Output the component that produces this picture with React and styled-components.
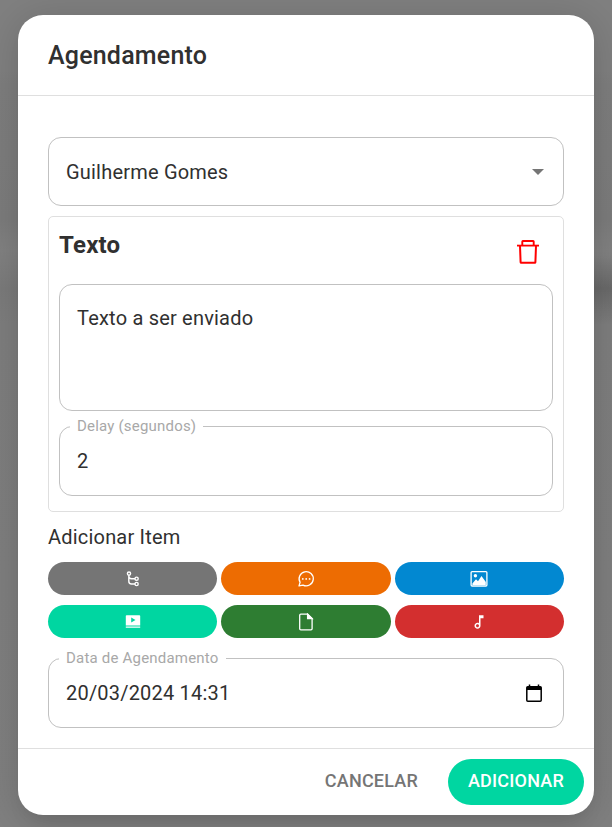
import React, { useState } from "react";
import styled, { createGlobalStyle } from "styled-components";

const GlobalStyle = createGlobalStyle`
  *, *::before, *::after { box-sizing: border-box; }
  body {
    margin: 0;
    background: #808080;
    color: #303030;
    font-family: Roboto, "Liberation Sans", sans-serif;
    font-size: 20px;
    letter-spacing: 0.01em;
  }
  button, input, select, textarea { font: inherit; color: inherit; letter-spacing: inherit; }
`;

const Backdrop = styled.div`
  min-height: 100vh;
  display: flex;
  align-items: center;
  padding: 15px 18px 12px;
  background:
    linear-gradient(transparent 255px, rgba(0, 0, 0, 0.14) 288px, transparent 325px) right / 50% 100% no-repeat,
    linear-gradient(#808080 0 70px, #7e7e7e 84px, #7c7c7c 220px, #828282 250px, #7b7b7b 288px, #7e7e7e 325px, #808080);
`;

const Dialog = styled.form`
  flex: 1;
  min-width: 0;
  background: #fff;
  border-radius: 25px;
  box-shadow: 0 14px 19px -9px rgba(0, 0, 0, 0.1), 0 4px 40px 3px rgba(0, 0, 0, 0.14);
`;

const Header = styled.header`
  padding: 21px 30px 19px;
  border-bottom: 1px solid #dfdfdf;
`;

const Title = styled.h2`
  margin: 0;
  font-size: 25px;
  line-height: 40px;
  font-weight: 500;
`;

const Content = styled.div`
  padding: 41px 30px 20px;
`;

const Footer = styled.footer`
  display: flex;
  justify-content: flex-end;
  gap: 10px;
  padding: 10px;
  border-top: 1px solid #dfdfdf;
`;

const Field = styled.div`
  position: relative;
  display: flex;
  align-items: center;
  min-height: ${(p) => p.$height || 70}px;
  border: 1px solid #c1c1c1;
  border-radius: 13px;
`;

const FieldLabel = styled.label`
  position: absolute;
  top: -11px;
  left: 10px;
  padding: 0 7px;
  background: #fff;
  color: #a8a8a8;
  font-size: 15px;
  line-height: 20px;
`;

const Input = styled.input`
  flex: 1;
  min-width: 0;
  padding: 0 17px;
  border: 0;
  outline: 0;
  background: transparent;
  line-height: 28px;
`;

const Select = styled.select`
  flex: 1;
  align-self: stretch;
  min-width: 0;
  padding: 0 40px 0 17px;
  border: 0;
  outline: 0;
  appearance: none;
  background: transparent;
`;

const SelectArrow = styled.svg`
  position: absolute;
  right: 19px;
  width: 12px;
  height: 6px;
  fill: #757575;
  pointer-events: none;
`;

const TextArea = styled.textarea`
  flex: 1;
  align-self: stretch;
  min-width: 0;
  padding: 19px 17px;
  border: 0;
  outline: 0;
  resize: none;
  background: transparent;
  line-height: 28px;
`;

const ItemCard = styled.section`
  display: flex;
  flex-direction: column;
  gap: 15px;
  margin-top: 10px;
  padding: 10px 10px 15px;
  border: 1px solid #dfdfdf;
  border-radius: 5px;
`;

const ItemHeader = styled.div`
  display: flex;
  justify-content: space-between;
  height: 42px;
`;

const ItemTitle = styled.h3`
  margin: 0;
  font-size: 24px;
  line-height: 36px;
  font-weight: 700;
`;

const IconButton = styled.button`
  display: flex;
  align-items: center;
  padding: ${(p) => p.$pad || "0"};
  border: 0;
  background: none;
  cursor: pointer;
`;

const SectionLabel = styled.p`
  margin: 10px 0;
  line-height: 30px;
`;

const ItemGrid = styled.div`
  display: grid;
  grid-template-columns: repeat(3, 1fr);
  gap: 10px 4px;
  margin-bottom: 20px;
`;

const ItemButton = styled.button`
  display: flex;
  align-items: center;
  justify-content: center;
  height: 33px;
  padding: 0;
  border: 0;
  border-radius: 17px;
  background: ${(p) => p.$color};
  color: #fff;
  cursor: pointer;
`;

const ActionButton = styled.button`
  height: 46px;
  padding: 0 20px 3px;
  border: 0;
  border-radius: 23px;
  background: ${(p) => (p.$primary ? "#00d6a1" : "transparent")};
  color: ${(p) => (p.$primary ? "#fff" : "#757575")};
  font-size: 18px;
  font-weight: 500;
  text-transform: uppercase;
  cursor: pointer;
`;

const Icon = ({ size = 18, children, ...rest }) => (
  <svg width={size} height={size} viewBox={`0 0 ${size} ${size}`} fill="none" stroke="currentColor" strokeWidth="1.3" aria-hidden="true" {...rest}>
    {children}
  </svg>
);

const FlowIcon = () => (
  <Icon strokeWidth="1.4">
    <circle cx="5" cy="3.6" r="1.6" />
    <circle cx="12.6" cy="8.7" r="1.6" />
    <circle cx="12.6" cy="14" r="1.6" />
    <path d="M4.8 5.2v6.1q0 2.7 2.7 2.7H11M4.8 6q0 2.7 2.7 2.7H11" />
  </Icon>
);

const ChatIcon = () => (
  <Icon>
    <path d="M3.1 12.4A7.1 7.1 0 1 1 6 15.1L2 15.9Z" strokeLinejoin="round" />
    <g fill="currentColor" stroke="none">
      <circle cx="5.8" cy="8.9" r="0.9" />
      <circle cx="9.2" cy="8.9" r="0.9" />
      <circle cx="12.6" cy="8.9" r="0.9" />
    </g>
  </Icon>
);

const ImageIcon = () => (
  <Icon>
    <rect x="1.1" y="1.6" width="15.8" height="14.4" rx="1" />
    <circle cx="5.4" cy="5.8" r="1.7" fill="currentColor" stroke="none" />
    <path d="M2.4 15v-1.6L6 9.2l2 2 3.5-5.1 4.3 6V15Z" fill="currentColor" stroke="none" />
  </Icon>
);

const VideoIcon = () => (
  <Icon>
    <path fillRule="evenodd" d="M1.8 3q0-.8.8-.8h12.8q.8 0 .8.8v9H1.8ZM7.2 4.6v5l4.3-2.5Z" fill="currentColor" stroke="none" />
    <path d="M1.8 12.6h14.4v.6H1.8ZM1.8 13.8h14.4v1H1.8Z" fill="currentColor" stroke="none" />
  </Icon>
);

const FileIcon = () => (
  <Icon>
    <path d="M3.8 1.2h6.8l4.5 4.4v10.1q0 1.1-1.1 1.1H3.8q-1.1 0-1.1-1.1V2.3q0-1.1 1.1-1.1Z" />
    <path d="M10.6 1.2v4.4h4.5Z" fill="currentColor" />
  </Icon>
);

const MusicIcon = () => (
  <Icon viewBox="0 0 24 24" fill="currentColor" stroke="none">
    <path d="m12 3 .01 10.55c-.59-.34-1.27-.55-2-.55C7.79 13 6 14.79 6 17s1.79 4 4.01 4S14 19.21 14 17V7h4V3h-6zm-1.99 16c-1.1 0-2-.9-2-2s.9-2 2-2 2 .9 2 2-.9 2-2 2z" />
  </Icon>
);

const TrashIcon = () => (
  <Icon size={24} stroke="#f00" strokeWidth="2">
    <path d="M1 5.6h22" strokeWidth="1.8" />
    <path d="M6.3 5V1.6q0-.6.6-.6h10.2q.6 0 .6.6V5" strokeWidth="1.9" />
    <path d="M4 5.8l.6 16.4q0 .6.7.6h13.4q.7 0 .7-.6L20 5.8" />
  </Icon>
);

const CalendarIcon = () => (
  <Icon stroke="#000" strokeWidth="1.5">
    <rect x="1.8" y="2.8" width="14.4" height="14.4" rx="1" />
    <path d="M1.8 4.4h14.4" strokeWidth="3.2" />
    <path d="M4.5.4v3M13.5.4v3" />
  </Icon>
);

const ITEMS = [
  { name: "Fluxo", color: "#757575", Glyph: FlowIcon },
  { name: "Mensagem", color: "#ed6c02", Glyph: ChatIcon },
  { name: "Imagem", color: "#0288d1", Glyph: ImageIcon },
  { name: "Vídeo", color: "#00d6a1", Glyph: VideoIcon },
  { name: "Documento", color: "#2e7d32", Glyph: FileIcon },
  { name: "Áudio", color: "#d32f2f", Glyph: MusicIcon },
];

export default function App() {
  const [text, setText] = useState("Texto a ser enviado");
  const [delay, setDelay] = useState("2");
  const [date, setDate] = useState("20/03/2024 14:31");

  return (
    <>
      <GlobalStyle />
      <Backdrop>
        <Dialog role="dialog" aria-labelledby="title" onSubmit={(e) => e.preventDefault()}>
          <Header>
            <Title id="title">Agendamento</Title>
          </Header>
          <Content>
            <Field $height={69}>
              <Select aria-label="Contato" defaultValue="guilherme">
                <option value="guilherme">Guilherme Gomes</option>
              </Select>
              <SelectArrow viewBox="0 0 12 6" aria-hidden="true">
                <path d="M0 0h12L6 6Z" />
              </SelectArrow>
            </Field>
            <ItemCard>
              <ItemHeader>
                <ItemTitle>Texto</ItemTitle>
                <IconButton type="button" aria-label="Remover" $pad="8px 13px 0">
                  <TrashIcon />
                </IconButton>
              </ItemHeader>
              <Field $height={127}>
                <TextArea aria-label="Texto" value={text} onChange={(e) => setText(e.target.value)} />
              </Field>
              <Field>
                <FieldLabel htmlFor="delay">Delay (segundos)</FieldLabel>
                <Input id="delay" inputMode="numeric" value={delay} onChange={(e) => setDelay(e.target.value)} />
              </Field>
            </ItemCard>
            <SectionLabel>Adicionar Item</SectionLabel>
            <ItemGrid>
              {ITEMS.map(({ name, color, Glyph }) => (
                <ItemButton key={name} type="button" aria-label={name} $color={color}>
                  <Glyph />
                </ItemButton>
              ))}
            </ItemGrid>
            <Field>
              <FieldLabel htmlFor="date">Data de Agendamento</FieldLabel>
              <Input id="date" value={date} onChange={(e) => setDate(e.target.value)} />
              <IconButton type="button" aria-label="Abrir calendário" $pad="0 20px">
                <CalendarIcon />
              </IconButton>
            </Field>
          </Content>
          <Footer>
            <ActionButton type="button">Cancelar</ActionButton>
            <ActionButton type="submit" $primary>Adicionar</ActionButton>
          </Footer>
        </Dialog>
      </Backdrop>
    </>
  );
}
